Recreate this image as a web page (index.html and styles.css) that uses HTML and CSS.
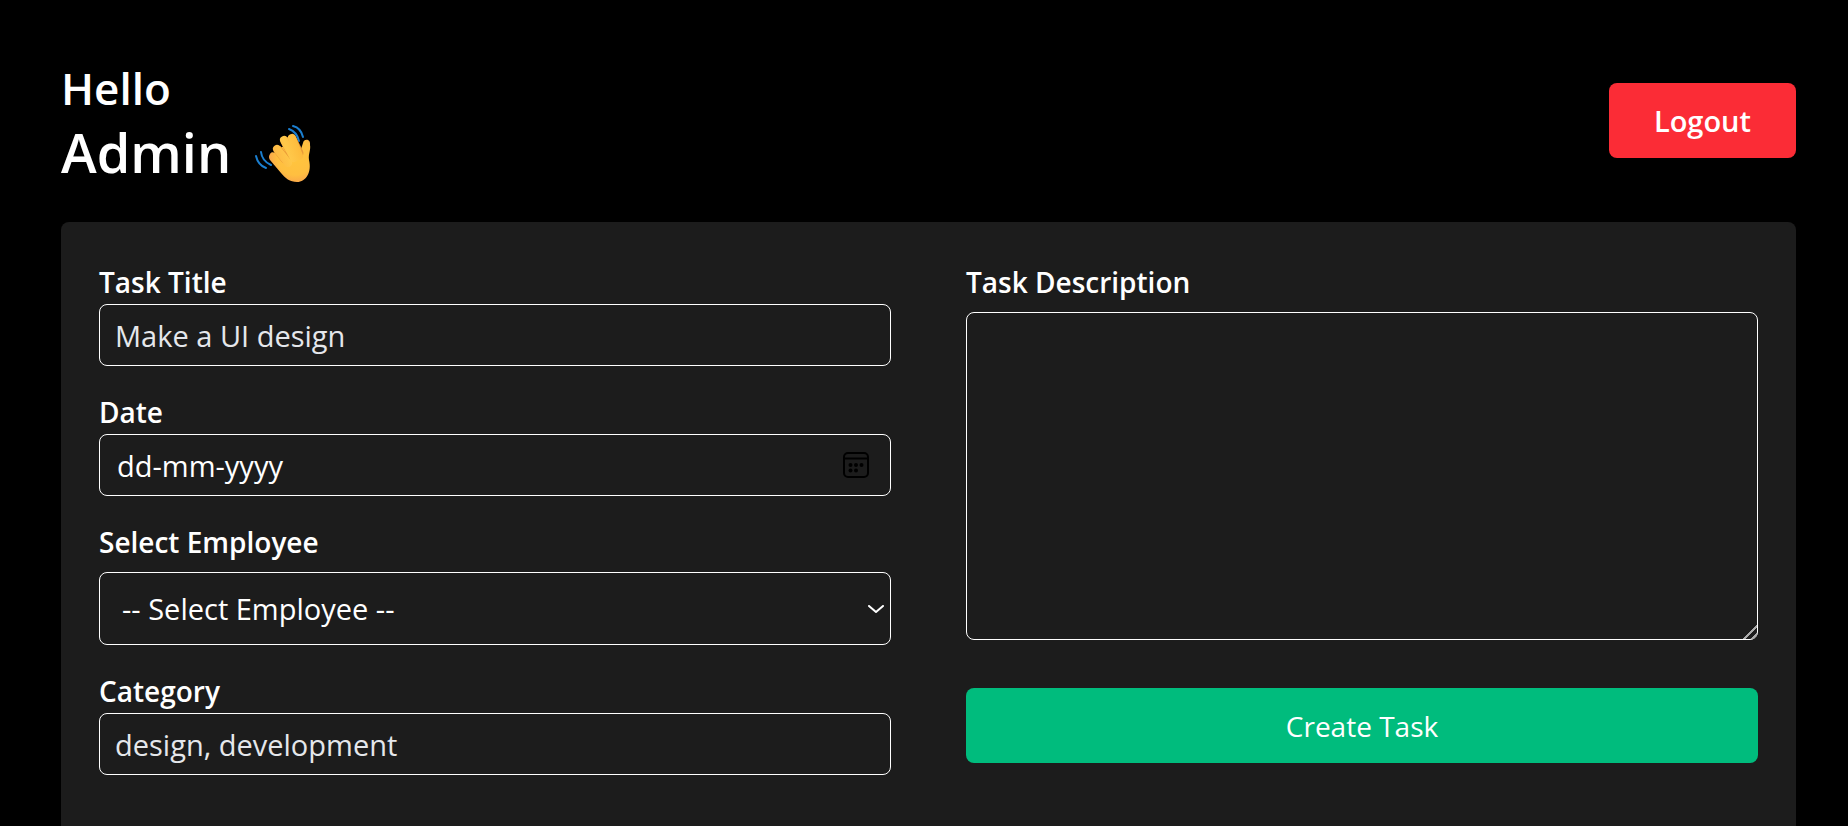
FILE: index.html
```html
<!DOCTYPE html>
<html lang="en">
<head>
<meta charset="utf-8">
<meta name="viewport" content="width=device-width, initial-scale=1">
<title>Admin Dashboard</title>
<link rel="stylesheet" href="styles.css">
</head>
<body>
<main class="page">
  <header class="header">
    <h1 class="greeting">Hello
      <span class="greeting-name">Admin
        <svg class="wave" viewBox="0 0 62 62" role="img" aria-label="Waving hand">
          <defs>
            <radialGradient id="skin" cx="41" cy="36" r="30" gradientUnits="userSpaceOnUse">
              <stop offset="0" stop-color="#ffc53d"/>
              <stop offset="0.6" stop-color="#ffbf40"/>
              <stop offset="0.82" stop-color="#fbab48"/>
              <stop offset="1" stop-color="#f28f5c"/>
            </radialGradient>
            <linearGradient id="finger" x1="18" y1="30" x2="46" y2="20" gradientUnits="userSpaceOnUse">
              <stop offset="0" stop-color="#fdb743"/>
              <stop offset="0.5" stop-color="#ffc84a"/>
              <stop offset="1" stop-color="#fdb93a"/>
            </linearGradient>
          </defs>
          <g fill="none" stroke="#1b7fd0" stroke-width="2" stroke-linecap="round">
            <path d="M35 8Q43 11 45 20"/>
            <path d="M39 5Q47 7 49 16"/>
            <path d="M2 35Q4 44 12 47"/>
            <path d="M7 31Q8 40 17 44"/>
          </g>
          <path fill="url(#skin)" d="M16 33C17 31 19 31 21 32L28 26L36 24L43 26L46 31L49 22C50 17 57 18 56 24C57 29 54 33 55 39C58 51 52 61 43 61C36 61 31 57 27 52L16 39Q14 36 16 33Z"/>
          <g fill="none" stroke-linecap="round">
            <path stroke="#e99a37" stroke-width="9" d="M24 29L31 38M31 20L38 34M38 18L45 32"/>
            <path stroke="url(#finger)" stroke-width="8" d="M23 28L34 42"/>
            <path stroke="url(#finger)" stroke-width="8" d="M30 19L40 37"/>
            <path stroke="url(#finger)" stroke-width="8" d="M38 17L45 35"/>
          </g>
        </svg>
      </span>
    </h1>
    <button class="button button-logout" type="button">Logout</button>
  </header>
  <form class="panel">
    <div class="column">
      <div class="field">
        <label class="label" for="title">Task Title</label>
        <input class="control" id="title" type="text" placeholder="Make a UI design">
      </div>
      <div class="field">
        <label class="label" for="date">Date</label>
        <div class="control-wrap">
          <input class="control control-date" id="date" type="text" placeholder="dd-mm-yyyy">
          <svg class="calendar" viewBox="0 0 26 26" aria-hidden="true">
            <rect x="1" y="1" width="24" height="24" rx="4" fill="none" stroke="#000" stroke-width="2"/>
            <path d="M1 6.500H25" stroke="#000" stroke-width="2"/>
            <circle cx="7.500" cy="13" r="2"/><circle cx="13" cy="13" r="2"/><circle cx="18.500" cy="13" r="2"/>
            <circle cx="7.500" cy="18.500" r="2"/><circle cx="13" cy="18.500" r="2"/>
          </svg>
        </div>
      </div>
      <div class="field field-spaced">
        <label class="label" for="employee">Select Employee</label>
        <div class="control-wrap">
          <select class="control control-select" id="employee"><option>-- Select Employee --</option></select>
          <svg class="chevron" viewBox="0 0 16 8" aria-hidden="true"><path d="M1 1L8 7L15 1" fill="none" stroke="#fff" stroke-width="2" stroke-linecap="round"/></svg>
        </div>
      </div>
      <div class="field">
        <label class="label" for="category">Category</label>
        <input class="control" id="category" type="text" placeholder="design, development">
      </div>
    </div>
    <div class="column column-right">
      <div class="field field-spaced">
        <label class="label" for="description">Task Description</label>
        <textarea class="control control-area" id="description"></textarea>
      </div>
      <button class="button button-create" type="button">Create Task</button>
    </div>
  </form>
</main>
</body>
</html>
```
FILE: styles.css
```css
* { box-sizing: border-box; }

body {
  margin: 0;
  background: #000;
  color: #fff;
  font-family: "Open Sans", "Noto Sans", sans-serif;
  font-size: 28px;
  line-height: 44px;
}

.page {
  display: flex;
  flex-direction: column;
  min-height: 100vh;
  padding: 56px 52px 0 61px;
}

.header {
  display: flex;
  align-items: center;
  justify-content: space-between;
  margin-bottom: 38px;
}

.greeting {
  margin: 0;
  font-size: 44px;
  font-weight: 600;
  line-height: 64px;
}

.greeting-name {
  display: flex;
  align-items: center;
  gap: 23px;
  font-size: 54px;
}

.wave { width: 62px; height: 62px; }

.button {
  border: 0;
  border-radius: 8px;
  color: #fff;
  font: inherit;
  padding: 16px 45px 15px;
}

.button-logout { background: #fb2c36; font-size: 29px; font-weight: 600; }
.button-create { background: #00bc7d; width: 100%; }

.panel {
  flex: 1;
  display: grid;
  grid-template-columns: 1fr 1fr;
  gap: 75px;
  padding: 38px 38px 52px;
  border-radius: 8px 8px 0 0;
  background: #1c1c1c;
}

.column {
  display: flex;
  flex-direction: column;
  gap: 24px;
}

.column-right { gap: 48px; }

.field { display: flex; flex-direction: column; }
.field-spaced { gap: 8px; }
.label { font-weight: 600; }

.control {
  display: block;
  width: 100%;
  height: 62px;
  margin: 0;
  padding: 0 15px;
  border: 1px solid #fff;
  border-radius: 8px;
  background: transparent;
  color: #fff;
  font: inherit;
  font-size: 29px;
}

.control::placeholder { color: #e5e7eb; opacity: 1; }
.control-date::placeholder { color: #fff; }
.control-date { padding: 0 60px 0 17px; }
.control-select { height: 73px; padding: 0 40px 0 22px; appearance: none; }
.control-select option { background: #1c1c1c; }
.control-area { height: 328px; padding: 15px; resize: vertical; }

.control-area::-webkit-resizer {
  background: linear-gradient(135deg, transparent 52%, #aaa 52%, #aaa 62%, transparent 62%, transparent 78%, #aaa 78%, #aaa 88%, transparent 88%);
}

.control-wrap { position: relative; }
.calendar, .chevron { position: absolute; top: 0; bottom: 0; margin: auto 0; pointer-events: none; }
.calendar { right: 22px; width: 26px; height: 26px; }
.chevron { right: 7px; width: 16px; height: 8px; }
```
